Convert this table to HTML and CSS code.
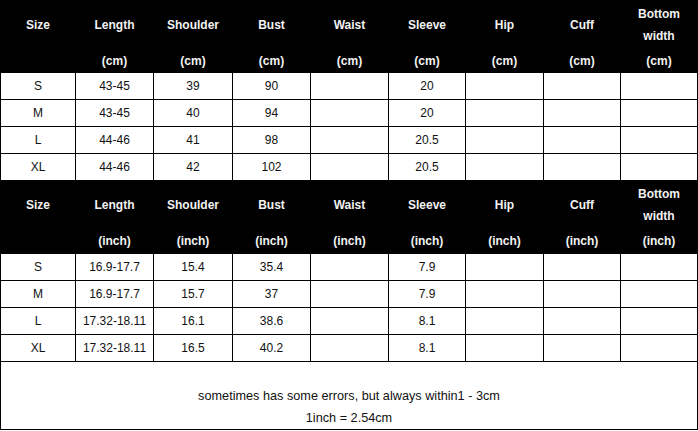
FILE: index.html
```html
<!DOCTYPE html>
<html>
<head>
<meta charset="utf-8">
<link rel="stylesheet" href="styles.css">
</head>
<body>
<table class="chart">
  <colgroup>
    <col class="c-size"><col class="c78"><col class="c79"><col class="c78"><col class="c78"><col class="c77"><col class="c78"><col class="c77"><col class="c77">
  </colgroup>
  <tbody>
    <tr class="head-top">
      <th>Size</th><th>Length</th><th>Shoulder</th><th>Bust</th><th>Waist</th><th>Sleeve</th><th>Hip</th><th>Cuff</th><th>Bottom<br>width</th>
    </tr>
    <tr class="head-unit">
      <th></th><th>(cm)</th><th>(cm)</th><th>(cm)</th><th>(cm)</th><th>(cm)</th><th>(cm)</th><th>(cm)</th><th>(cm)</th>
    </tr>
    <tr class="row"><td>S</td><td>43-45</td><td>39</td><td>90</td><td></td><td>20</td><td></td><td></td><td></td></tr>
    <tr class="row"><td>M</td><td>43-45</td><td>40</td><td>94</td><td></td><td>20</td><td></td><td></td><td></td></tr>
    <tr class="row"><td>L</td><td>44-46</td><td>41</td><td>98</td><td></td><td>20.5</td><td></td><td></td><td></td></tr>
    <tr class="row"><td>XL</td><td>44-46</td><td>42</td><td>102</td><td></td><td>20.5</td><td></td><td></td><td></td></tr>
    <tr class="head-top">
      <th>Size</th><th>Length</th><th>Shoulder</th><th>Bust</th><th>Waist</th><th>Sleeve</th><th>Hip</th><th>Cuff</th><th>Bottom<br>width</th>
    </tr>
    <tr class="head-unit head-unit-2">
      <th></th><th>(inch)</th><th>(inch)</th><th>(inch)</th><th>(inch)</th><th>(inch)</th><th>(inch)</th><th>(inch)</th><th>(inch)</th>
    </tr>
    <tr class="row"><td>S</td><td>16.9-17.7</td><td>15.4</td><td>35.4</td><td></td><td>7.9</td><td></td><td></td><td></td></tr>
    <tr class="row"><td>M</td><td>16.9-17.7</td><td>15.7</td><td>37</td><td></td><td>7.9</td><td></td><td></td><td></td></tr>
    <tr class="row"><td>L</td><td>17.32-18.11</td><td>16.1</td><td>38.6</td><td></td><td>8.1</td><td></td><td></td><td></td></tr>
    <tr class="row"><td>XL</td><td>17.32-18.11</td><td>16.5</td><td>40.2</td><td></td><td>8.1</td><td></td><td></td><td></td></tr>
    <tr class="note">
      <td colspan="9"><br>sometimes has some errors, but always within1 - 3cm<br>1inch = 2.54cm</td>
    </tr>
  </tbody>
</table>
</body>
</html>
```

FILE: styles.css
```css
html, body {
  margin: 0;
  padding: 0;
  background: #ffffff;
}

.chart {
  border-collapse: collapse;
  table-layout: fixed;
  width: 698px;
  font-family: "Liberation Sans", Arial, sans-serif;
  font-size: 12px;
  color: #111;
}

.c-size { width: 75px; }
.c78 { width: 78px; }
.c79 { width: 79px; }
.c77 { width: 77px; }

.chart th,
.chart td {
  border: 1px solid #000;
  padding: 0;
  text-align: center;
  vertical-align: middle;
}

.chart th {
  background: #000;
  color: #f2f2f2;
  font-weight: bold;
  line-height: 22px;
}

.head-top { height: 48px; }
.head-unit { height: 24px; }
.head-unit-2 { height: 25px; }

.row { height: 27px; }
.row td { line-height: 14px; }

.note { height: 68px; }
.note td {
  font-size: 12.7px;
  line-height: 22px;
  color: #111;
}
```
